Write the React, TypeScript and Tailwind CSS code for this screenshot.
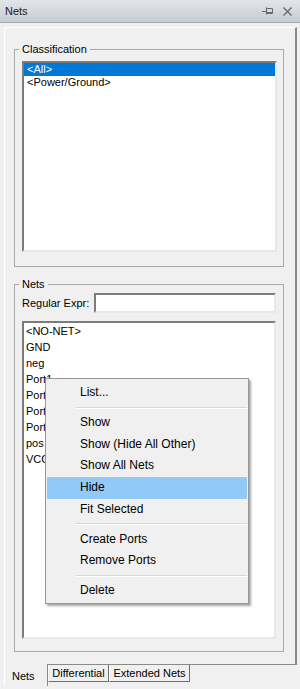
import React from "react";

const classItems = ["<All>", "<Power/Ground>"];
const netItems = ["<NO-NET>", "GND", "neg", "Port1", "Port2", "Port3", "Port4", "pos", "VCC"];

type MenuEntry = { label: string; active?: boolean } | "sep";

const menu: MenuEntry[] = [
  { label: "List..." },
  "sep",
  { label: "Show" },
  { label: "Show (Hide All Other)" },
  { label: "Show All Nets" },
  { label: "Hide", active: true },
  { label: "Fit Selected" },
  "sep",
  { label: "Create Ports" },
  { label: "Remove Ports" },
  "sep",
  { label: "Delete" },
];

const sunken =
  "bg-white border-2 border-t-[#7c7c7c] border-l-[#7c7c7c] border-b-[#e8e8e8] border-r-[#e8e8e8]";

const App = () => {
  return (
    <div className="relative w-[300px] h-[689px] bg-[#f0f0f0] overflow-hidden font-['Liberation_Sans',Arial,sans-serif] text-[11px] text-black">
      {/* title bar */}
      <div className="h-[23px] flex items-center px-[5px] bg-gradient-to-b from-[#e2e5e9] to-[#c8cbd0] border-b border-[#a3a6ab]">
        <span className="text-[11px] text-[#1b1b1b]">Nets</span>
        <div className="ml-auto flex items-center gap-[10px] pr-[3px]">
          <svg width="11" height="8" viewBox="0 0 11 8" fill="none" stroke="#6b6b6b" strokeWidth="1">
            <path d="M0 4.5h4.5 M4.5 0.5v7 M5 1.5h5.5v5h-5.5 M5 5.5h5.5" />
          </svg>
          <svg width="9" height="9" viewBox="0 0 9 9" fill="none" stroke="#6b6b6b" strokeWidth="1.4">
            <path d="M0.5 0.5l8 8 M8.5 0.5l-8 8" />
          </svg>
        </div>
      </div>

      {/* tab panel */}
      <div className="mt-[4px] ml-[4px] w-[293px] h-[638px] border-l border-t border-white border-r-2 border-r-[#8a8a8a] border-b border-b-[#8a8a8a] pl-[9px]">
        <fieldset className="mt-[15px] w-[270px] h-[224px] border border-[#a9a9a9]">
          <legend className="ml-[4px] px-[3px] leading-[13px] text-[11px]">Classification</legend>
          <div className={`ml-[7px] mt-[5px] w-[255px] h-[191px] ${sunken}`}>
            {classItems.map((c, i) => (
              <div
                key={c}
                className={`h-[13px] leading-[13px] pl-[3px] ${i === 0 ? "bg-[#0078d7] text-white" : ""}`}
              >
                {c}
              </div>
            ))}
          </div>
        </fieldset>

        <fieldset className="mt-[11px] w-[270px] h-[374px] border border-[#a9a9a9]">
          <legend className="ml-[4px] px-[3px] leading-[13px] text-[11px]">Nets</legend>
          <div className="mt-[2px] flex items-center">
            <span className="ml-[7px]">Regular Expr:</span>
            <div className={`ml-auto mr-[7px] w-[182px] h-[20px] ${sunken}`} />
          </div>
          <div className={`ml-[7px] mt-[8px] w-[254px] h-[318px] pl-[2px] ${sunken}`}>
            {netItems.map((n) => (
              <div key={n} className="h-[16px] leading-[16px]">
                {n}
              </div>
            ))}
          </div>
        </fieldset>
      </div>

      {/* tabs */}
      <div className="flex items-start ml-[4px]">
        <div className="relative -mt-[1px] w-[44px] h-[22px] bg-[#f0f0f0] border-l border-white border-r border-r-[#8a8a8a] pl-[7px] pt-[4px]">
          Nets
        </div>
        <div className="w-[61px] h-[17px] border-l border-white border-r border-r-[#6d6d6d] border-b border-b-[#6d6d6d] flex items-center justify-center">
          Differential
        </div>
        <div className="w-[81px] h-[17px] border-l border-white border-r border-r-[#6d6d6d] border-b border-b-[#6d6d6d] flex items-center justify-center">
          Extended Nets
        </div>
      </div>

      {/* context menu */}
      <div className="absolute left-[45px] top-[378px] w-[204px] bg-[#f0f0f0] border border-[#979797] shadow-[2px_2px_2px_rgba(0,0,0,0.35)] pt-[3px] pb-[1px] px-[1px] text-[12px] text-black">
        {menu.map((m, i) =>
          m === "sep" ? (
            <div key={i} className="h-[8.33px] flex items-center pl-[29px]">
              <div className="w-full h-[1px] bg-[#d7d7d7] border-b border-white box-content" />
            </div>
          ) : (
            <div
              key={i}
              className={`h-[21.67px] leading-[21.67px] pl-[33px] ${m.active ? "bg-[#91c9f7]" : ""}`}
            >
              {m.label}
            </div>
          )
        )}
      </div>
    </div>
  );
};

export default App;
